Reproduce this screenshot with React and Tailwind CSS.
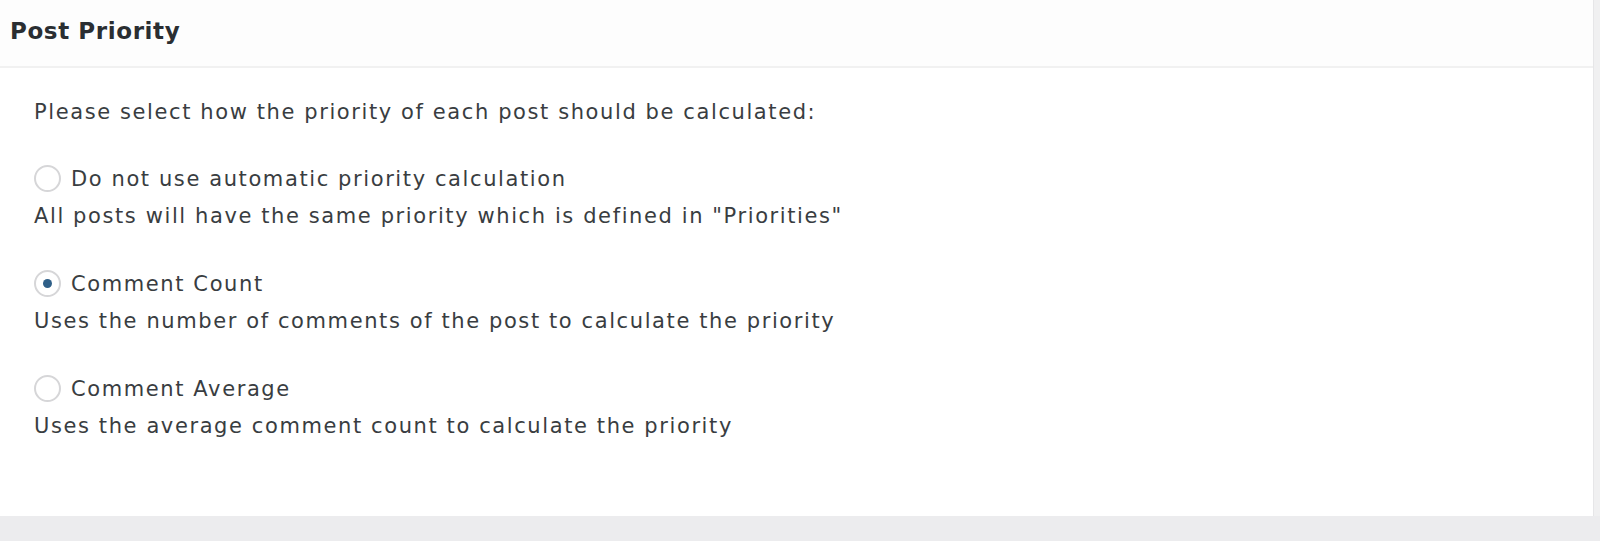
export default function App() {
  const options = [
    {
      label: 'Do not use automatic priority calculation',
      note: 'All posts will have the same priority which is defined in "Priorities"',
      checked: false,
    },
    {
      label: 'Comment Count',
      note: 'Uses the number of comments of the post to calculate the priority',
      checked: true,
    },
    {
      label: 'Comment Average',
      note: 'Uses the average comment count to calculate the priority',
      checked: false,
    },
  ]

  return (
    <div className="w-[1600px] h-[541px] bg-[#f0f0f1] flex flex-col overflow-hidden font-['DejaVu_Sans',sans-serif]">
      <div className="w-[1594px] bg-white flex flex-col flex-1 border-r border-[#e6e6e8]">
        {/* Header */}
        <div className="h-[68px] flex items-center px-[10px] border-b-2 border-[#f1f1f1] bg-[#fdfdfd]">
          <h2 className="text-[23px] font-bold text-[#2a2e32] tracking-[0.6px] -mt-[4px]">Post Priority</h2>
        </div>

        {/* Body */}
        <div className="px-[34px] pt-[32px] text-[21px] tracking-[1.6px] text-[#393d41]">
          <p className="mb-[41px] leading-[24px]">Please select how the priority of each post should be calculated:</p>

          <div className="flex flex-col gap-[42px]">
            {options.map((o) => (
              <div key={o.label}>
                <label className="flex items-center gap-[10px] leading-[26px]">
                  <span className="w-[27px] h-[27px] rounded-full border-2 border-[#d6d6d8] bg-white flex items-center justify-center shrink-0">
                    {o.checked && <span className="w-[9px] h-[9px] rounded-full bg-[#2f5f88]" />}
                  </span>
                  <span>{o.label}</span>
                </label>
                <p className="mt-[12px] leading-[24px]">{o.note}</p>
              </div>
            ))}
          </div>
        </div>
      </div>
      <div className="h-[25px] bg-[#ececee] shrink-0" />
    </div>
  )
}
